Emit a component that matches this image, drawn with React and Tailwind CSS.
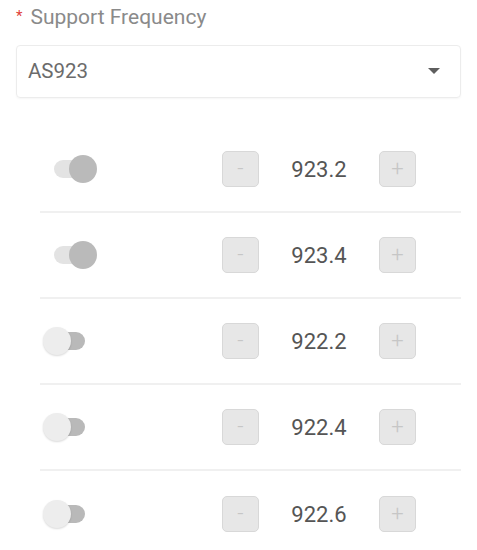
import React from 'react';

const rows = [
  { on: true, value: '923.2' },
  { on: true, value: '923.4' },
  { on: false, value: '922.2' },
  { on: false, value: '922.4' },
  { on: false, value: '922.6' },
];

const Toggle = ({ on }) => (
  <div className="relative w-[56px] h-[30px] shrink-0">
    {on ? (
      <>
        <div className="absolute left-[14px] top-[6px] w-[34px] h-[18px] rounded-full bg-[#e3e3e3]" />
        <div className="absolute left-[29px] top-[1px] w-[28px] h-[28px] rounded-full bg-[#bababa]" />
      </>
    ) : (
      <>
        <div className="absolute left-[5px] top-[6px] w-[40px] h-[18px] rounded-full bg-[#b9b9b9]" />
        <div className="absolute left-[3px] top-[1px] w-[28px] h-[28px] rounded-full bg-[#ededed] shadow-[0_1px_2px_rgba(0,0,0,0.15)]" />
      </>
    )}
  </div>
);

const StepButton = ({ children }) => (
  <button
    type="button"
    className="w-[37px] h-[36px] rounded-[5px] bg-[#e7e7e7] border border-[#d8d8d8] flex items-center justify-center text-[22px] font-light leading-none text-[#c6c6c6]"
  >
    {children}
  </button>
);

export default function App() {
  return (
    <div className="w-[477px] h-[550px] bg-white overflow-hidden px-4 pt-[6px] font-['Roboto',sans-serif]">
      {/* Label */}
      <div className="h-[24px] flex items-center text-[21px] text-[#8a8a8a]">
        <span className="text-[#e0403a] text-[15px] mr-[8px] -mt-[4px]">*</span>
        Support Frequency
      </div>

      {/* Select */}
      <div className="mt-[15px] h-[53px] border border-[#ececec] rounded-[4px] flex items-center justify-between pl-[11px] pr-[20px] shadow-[0_1px_2px_rgba(0,0,0,0.04)]">
        <span className="text-[20.5px] text-[#6b6b6b]">AS923</span>
        <svg width="12" height="7" viewBox="0 0 12 7">
          <path d="M0 0 L12 0 L6 6 Z" fill="#5e5e5e" />
        </svg>
      </div>

      {/* Channel list */}
      <div className="mt-[29px] ml-[24px]">
        {rows.map((row, i) => (
          <div
            key={row.value}
            className={`h-[86px] flex items-center ${i < rows.length - 1 ? 'border-b-2 border-[#f0f0f0]' : ''}`}
          >
            <Toggle on={row.on} />
            <div className="ml-[126px] flex items-center">
              <StepButton>-</StepButton>
              <span className="w-[120px] text-center text-[22px] text-[#555555]">{row.value}</span>
              <StepButton>+</StepButton>
            </div>
          </div>
        ))}
      </div>
    </div>
  );
}
